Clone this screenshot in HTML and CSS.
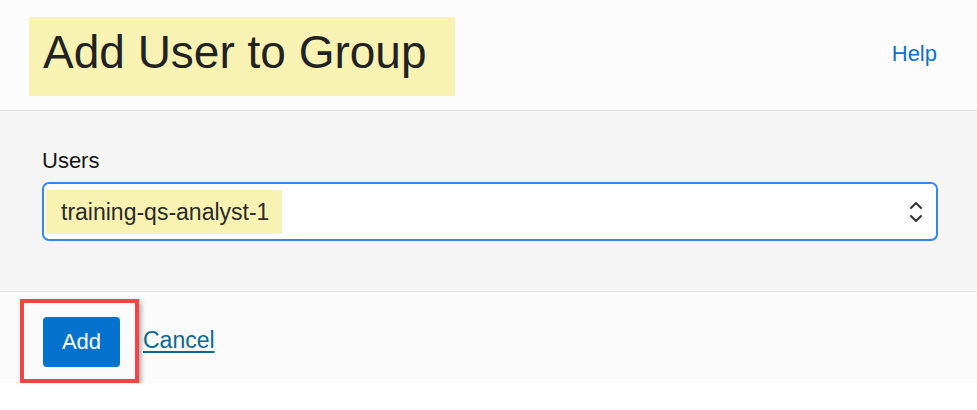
FILE: index.html
```html
<!DOCTYPE html>
<html lang="en">
<head>
<meta charset="utf-8">
<title>Add User to Group</title>
<link rel="stylesheet" href="styles.css">
</head>
<body>
<div class="dialog">
  <header class="dlg-header">
    <h1 class="dlg-title"><span class="hl title-hl">Add User to Group</span></h1>
    <a class="help-link" href="#">Help</a>
  </header>
  <section class="dlg-body">
    <label class="field-label" for="users">Users</label>
    <div class="select" id="users">
      <span class="hl select-value">training-qs-analyst-1</span>
      <svg class="chevrons" width="14" height="24" viewBox="0 0 14 24" aria-hidden="true">
        <path d="M2 8 L7 3 L12 8" fill="none" stroke="#333" stroke-width="2" stroke-linecap="round" stroke-linejoin="round"/>
        <path d="M2 16 L7 21 L12 16" fill="none" stroke="#333" stroke-width="2" stroke-linecap="round" stroke-linejoin="round"/>
      </svg>
    </div>
  </section>
  <footer class="dlg-footer">
    <button class="btn-primary" type="button">Add</button>
    <a class="cancel-link" href="#">Cancel</a>
    <div class="annot-box"></div>
  </footer>
</div>
</body>
</html>
```

FILE: styles.css
```css
html, body {
  margin: 0;
  padding: 0;
  background: #ffffff;
}
body {
  font-family: "Liberation Sans", Arial, sans-serif;
  color: #1c1c1c;
}
.dialog {
  width: 977px;
}
.hl {
  background: #f8f3b3;
}
.dlg-header {
  height: 111px;
  box-sizing: border-box;
  display: flex;
  align-items: flex-start;
  justify-content: space-between;
  padding: 17px 40px 0 29px;
  background: #fcfcfd;
  border-bottom: 1px solid #e2e2e2;
}
.dlg-title {
  margin: 0;
  font-weight: normal;
  font-size: 46px;
  line-height: 46px;
  display: flex;
  color: #222222;
}
.title-hl {
  display: block;
  padding: 12px 28px 21px 14px;
}
.help-link {
  font-size: 22px;
  line-height: 26px;
  color: #0d72cf;
  text-decoration: none;
  margin-top: 24px;
}
.dlg-body {
  background: #f5f5f5;
  padding: 37px 39px 50px 42px;
  border-bottom: 1px solid #e2e2e2;
}
.field-label {
  display: block;
  font-size: 22px;
  line-height: 26px;
  color: #161616;
  margin-bottom: 8px;
}
.select {
  height: 59px;
  box-sizing: border-box;
  border: 2px solid #3486f4;
  border-radius: 7px;
  background: #ffffff;
  display: flex;
  align-items: center;
  justify-content: space-between;
  padding: 0 13px 0 2px;
}
.select-value {
  height: 44px;
  line-height: 44px;
  font-size: 23px;
  padding: 0 13px 0 15px;
  color: #2a2a2a;
}
.chevrons {
  display: block;
  margin-top: 1px;
}
.dlg-footer {
  position: relative;
  height: 91px;
  box-sizing: border-box;
  background: #fbfbfb;
  display: flex;
  align-items: center;
  gap: 23px;
  padding: 0 0 0 43px;
}
.btn-primary {
  width: 77px;
  height: 50px;
  border: none;
  border-radius: 4px;
  background: #0572ce;
  color: #ffffff;
  font-family: "Liberation Sans", Arial, sans-serif;
  font-size: 22px;
  padding: 0;
  margin-top: 8px;
}
.cancel-link {
  font-size: 23px;
  color: #0c6a91;
  text-decoration: underline;
  text-underline-offset: 3px;
  margin-top: 6px;
}
.annot-box {
  position: absolute;
  left: 20px;
  top: 7px;
  width: 119px;
  height: 84px;
  box-sizing: border-box;
  border: 4px solid #f04545;
  box-shadow: 2px 3px 5px rgba(0, 0, 0, 0.35);
}
```
